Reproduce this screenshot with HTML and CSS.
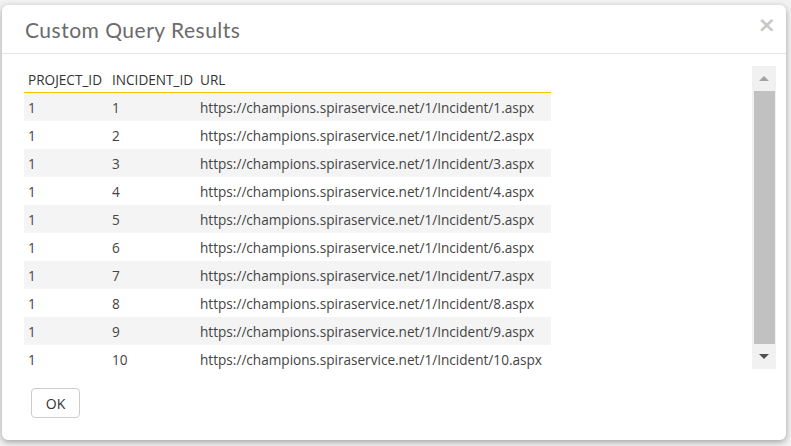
FILE: index.html
```html
<!DOCTYPE html>
<html>
<head>
<meta charset="utf-8">
<link rel="stylesheet" href="styles.css">
</head>
<body>
<div class="page">
  <div class="dialog">
    <div class="dlg-header">
      <div class="dlg-title">Custom Query Results</div>
      <div class="dlg-close">&times;</div>
    </div>
    <div class="dlg-body">
      <div class="table-wrap">
        <table class="results">
          <thead>
            <tr><th class="c1">PROJECT_ID</th><th class="c2">INCIDENT_ID</th><th class="c3">URL</th></tr>
          </thead>
          <tbody>
            <tr><td>1</td><td>1</td><td>https://champions.spiraservice.net/1/Incident/1.aspx</td></tr>
            <tr><td>1</td><td>2</td><td>https://champions.spiraservice.net/1/Incident/2.aspx</td></tr>
            <tr><td>1</td><td>3</td><td>https://champions.spiraservice.net/1/Incident/3.aspx</td></tr>
            <tr><td>1</td><td>4</td><td>https://champions.spiraservice.net/1/Incident/4.aspx</td></tr>
            <tr><td>1</td><td>5</td><td>https://champions.spiraservice.net/1/Incident/5.aspx</td></tr>
            <tr><td>1</td><td>6</td><td>https://champions.spiraservice.net/1/Incident/6.aspx</td></tr>
            <tr><td>1</td><td>7</td><td>https://champions.spiraservice.net/1/Incident/7.aspx</td></tr>
            <tr><td>1</td><td>8</td><td>https://champions.spiraservice.net/1/Incident/8.aspx</td></tr>
            <tr><td>1</td><td>9</td><td>https://champions.spiraservice.net/1/Incident/9.aspx</td></tr>
            <tr><td>1</td><td>10</td><td>https://champions.spiraservice.net/1/Incident/10.aspx</td></tr>
          </tbody>
        </table>
      </div>
      <div class="scrollbar">
        <div class="sb-btn"><span class="arrow-up"></span></div>
        <div class="sb-thumb"></div>
        <div class="sb-btn"><span class="arrow-down"></span></div>
      </div>
    </div>
    <div class="dlg-footer">
      <button class="btn-ok">OK</button>
    </div>
  </div>
</div>
</body>
</html>
```
FILE: styles.css
```css
html, body {
  margin: 0;
  padding: 0;
  background: #f2f2f2;
  font-family: "Open Sans", "Noto Sans", sans-serif;
}
.page {
  padding: 5px 5px 6px 2px;
}
.dialog {
  width: 784px;
  height: 435px;
  background: #fff;
  border-radius: 6px;
  box-shadow: 0 2px 6px rgba(0,0,0,0.35);
  display: flex;
  flex-direction: column;
  box-sizing: border-box;
}
.dlg-header {
  height: 49px;
  border-bottom: 1px solid #e5e5e5;
  box-sizing: border-box;
  display: flex;
  align-items: center;
  justify-content: space-between;
  padding: 0 10px 0 23px;
}
.dlg-title {
  font-family: "Lato", "Noto Sans", sans-serif;
  font-size: 21px;
  color: #6b6b6b;
  letter-spacing: 0.5px;
}
.dlg-close {
  font-family: "DejaVu Sans", sans-serif;
  font-size: 22px;
  font-weight: bold;
  color: #c8c8c8;
  line-height: 1;
  margin-top: -8px;
}
.dlg-body {
  display: flex;
  padding: 12px 10px 0 22px;
}
.table-wrap {
  flex: 1;
  height: 303px;
  overflow: hidden;
}
.results {
  border-collapse: separate;
  border-spacing: 0;
  font-size: 13.6px;
  color: #444;
}
.results th {
  font-weight: normal;
  text-align: left;
  color: #333;
  height: 27px;
  box-sizing: border-box;
  padding: 0 0 0 4px;
  border-bottom: 1px solid #f5c400;
}
.results th.c1 { width: 84px; }
.results th.c2 { width: 88px; }
.results th.c3 { width: 355px; }
.results td {
  height: 28px;
  padding: 0 0 0 4px;
}
.results tbody tr:nth-child(odd) td {
  background: #f4f4f4;
}
.scrollbar {
  width: 24px;
  height: 303px;
  background: #f1f1f1;
  display: flex;
  flex-direction: column;
  align-items: center;
}
.sb-btn {
  height: 25px;
  width: 100%;
  display: flex;
  align-items: center;
  justify-content: center;
}
.sb-thumb {
  flex: 1;
  width: 21px;
  background: #c1c1c1;
}
.arrow-up {
  width: 0; height: 0;
  border-left: 5px solid transparent;
  border-right: 5px solid transparent;
  border-bottom: 5px solid #a3a3a3;
}
.arrow-down {
  width: 0; height: 0;
  border-left: 5px solid transparent;
  border-right: 5px solid transparent;
  border-top: 5px solid #505050;
}
.dlg-footer {
  padding: 19px 0 0 29px;
}
.btn-ok {
  width: 49px;
  height: 30px;
  background: #fff;
  border: 1px solid #cccccc;
  border-radius: 4px;
  font-family: "Open Sans", "Noto Sans", sans-serif;
  font-size: 14px;
  color: #333;
  padding: 0;
}
```
